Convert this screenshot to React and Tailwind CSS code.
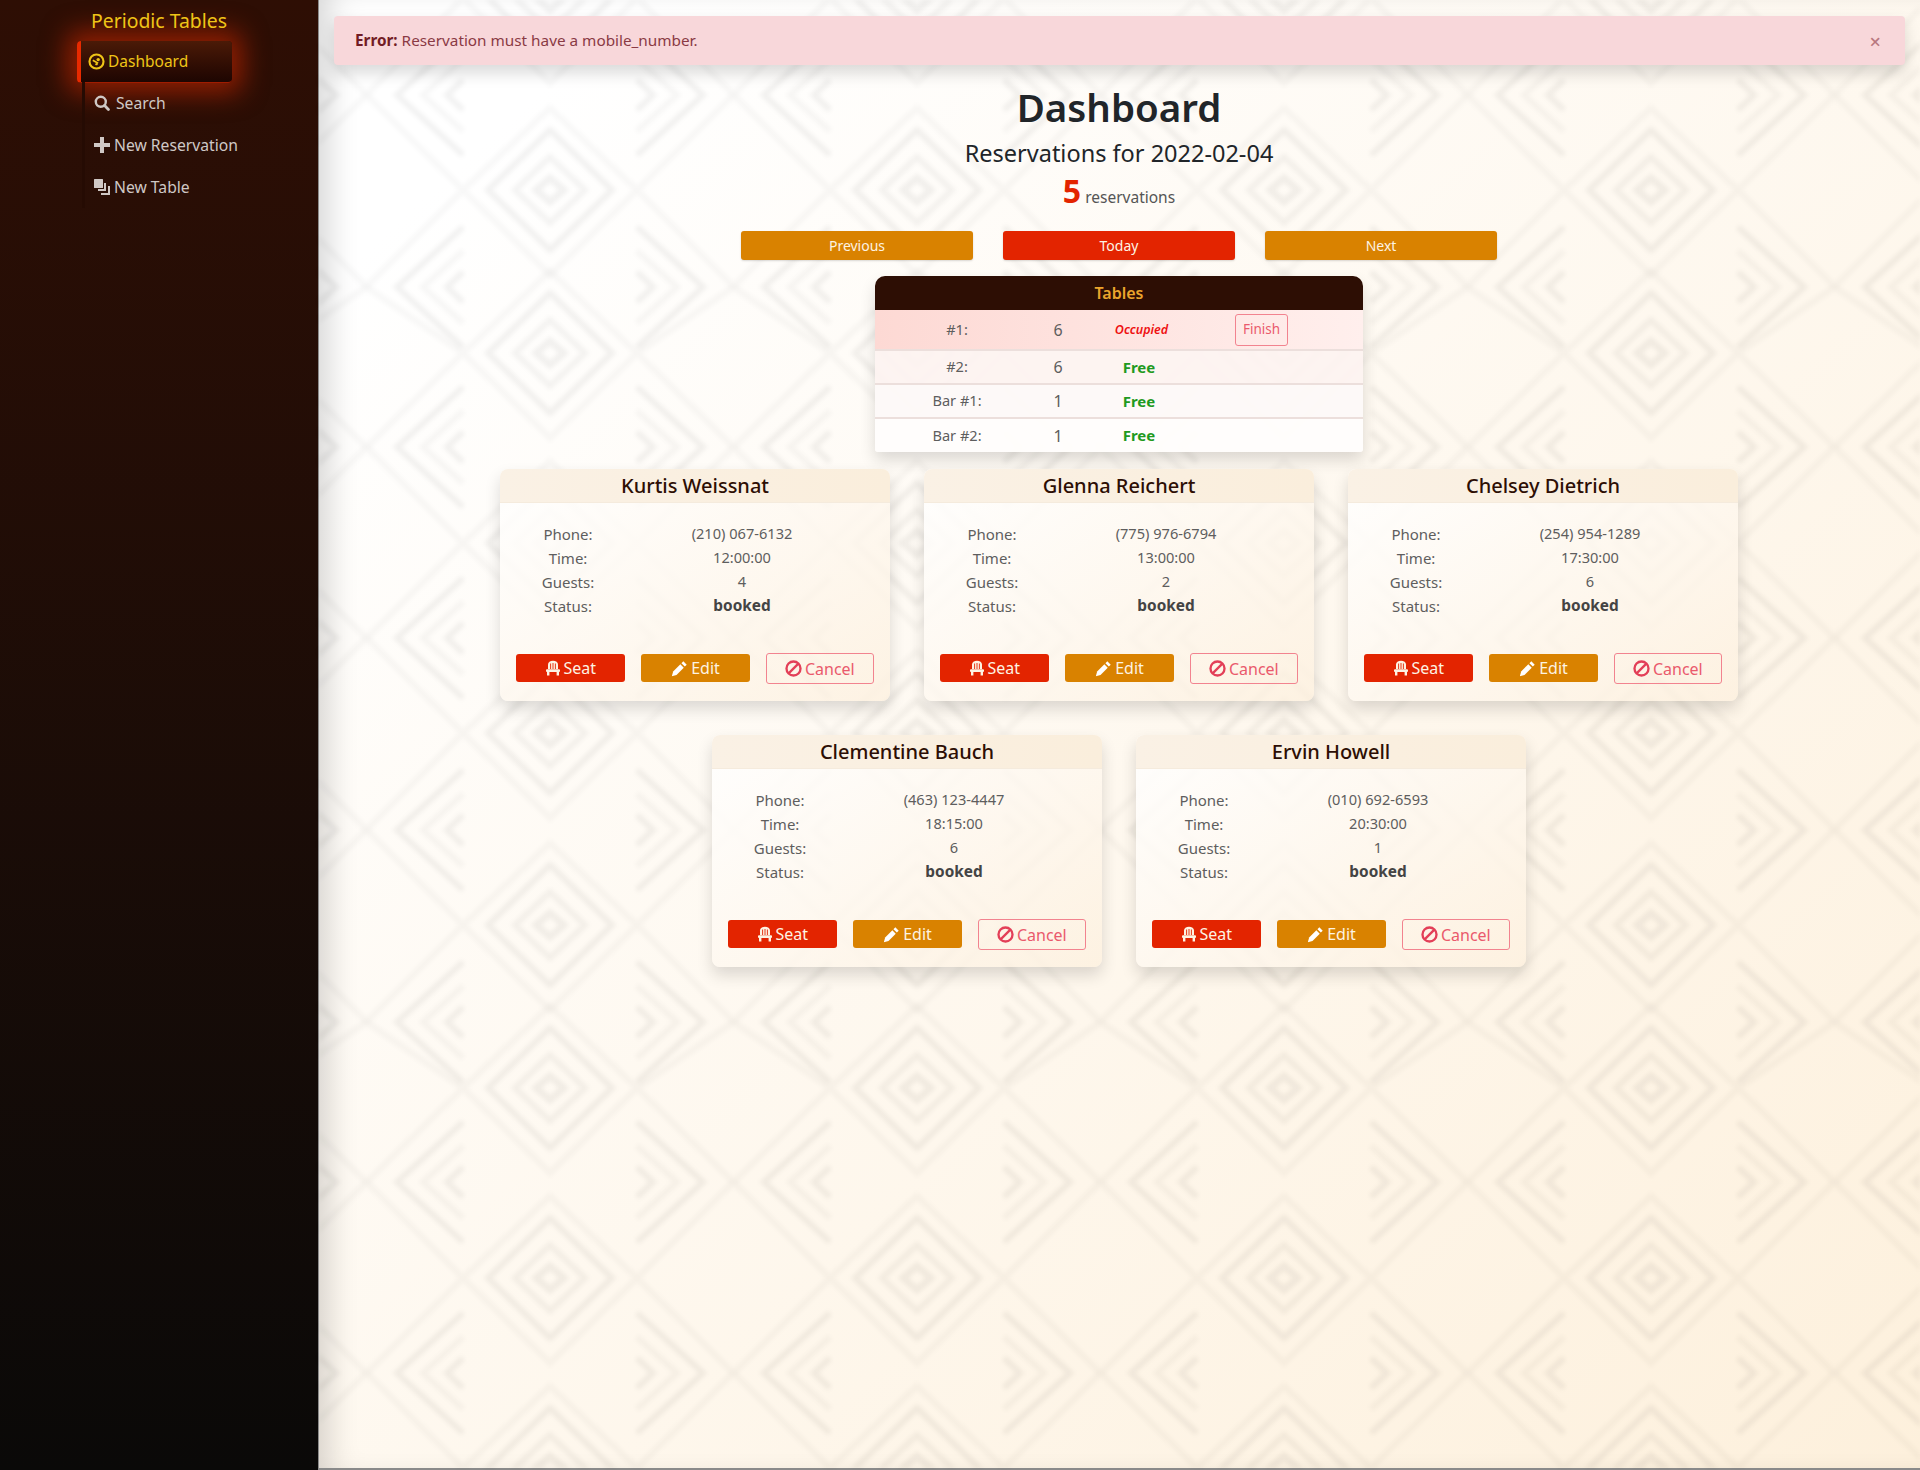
import React from "react";

const FONT = "font-['Noto_Sans',sans-serif]";

function DashIcon({ className }) {
  return (
    <svg viewBox="0 0 16 16" className={className} fill="none">
      <circle cx="8" cy="8" r="6.6" stroke="currentColor" strokeWidth="2" />
      <circle cx="9.6" cy="6.2" r="1.6" fill="currentColor" />
      <path d="M4.5 6.8 L9.5 9.6" stroke="currentColor" strokeWidth="1.6" />
      <circle cx="8" cy="10.5" r="1.1" fill="currentColor" />
    </svg>
  );
}
function SearchIcon({ className }) {
  return (
    <svg viewBox="0 0 16 16" className={className} fill="none">
      <circle cx="6.8" cy="6.8" r="5" stroke="currentColor" strokeWidth="2.4" />
      <path d="M10.6 10.6 L14.4 14.4" stroke="currentColor" strokeWidth="2.8" strokeLinecap="round" />
    </svg>
  );
}
function PlusIcon({ className }) {
  return (
    <svg viewBox="0 0 16 16" className={className} fill="currentColor">
      <path d="M6 0h4v6h6v4h-6v6H6v-6H0V6h6z" />
    </svg>
  );
}
function LayersIcon({ className }) {
  return (
    <svg viewBox="0 0 16 16" className={className} fill="currentColor">
      <rect x="0" y="0" width="9" height="9" rx="0.5" />
      <path d="M10 4h2v8H4v-2h6z" />
      <path d="M14 7h2v9H7v-2h7z" />
    </svg>
  );
}
function ChairIcon({ className }) {
  return (
    <svg viewBox="0 0 16 16" className={className} fill="currentColor">
      <path d="M3 9V4.5C3 2.3 5.2 0.8 8 0.8s5 1.5 5 3.7V9z" />
      <path d="M5.6 3.5V9M8 3V9M10.4 3.5V9" stroke="#e32400" strokeWidth="0.9" fill="none" />
      <rect x="1" y="9.3" width="14" height="2.7" rx="1" />
      <rect x="2" y="12" width="2.4" height="3.5" />
      <rect x="11.6" y="12" width="2.4" height="3.5" />
    </svg>
  );
}
function PencilIcon({ className }) {
  return (
    <svg viewBox="0 0 16 16" className={className} fill="currentColor">
      <path d="M11.6 1.2 L14.8 4.4 L13 6.2 L9.8 3 Z" />
      <path d="M8.8 4 L12 7.2 L5.2 14 L0.8 15.2 L2 10.8 Z" />
    </svg>
  );
}
function BanIcon({ className }) {
  return (
    <svg viewBox="0 0 16 16" className={className} fill="none">
      <circle cx="8" cy="8" r="6.6" stroke="currentColor" strokeWidth="2.2" />
      <path d="M3.4 12.6 L12.6 3.4" stroke="currentColor" strokeWidth="2.2" />
    </svg>
  );
}

/* decorative wallpaper: a repeating drawing of concentric diamonds and chevrons */
const CX = 183.5;
const DS = [190, 353, 543, 733];
const CS = [95, 287, 447, 638, 830];
const diamond = (cx, cy, w, h, h2 = h) =>
  `M${cx} ${cy - h} L${cx - w} ${cy} L${cx} ${cy + h2} L${cx + w} ${cy} Z`;

function tileShapes(shift) {
  const out = [];
  DS.forEach((d, i) => {
    const p = CS[i] + shift;
    const n = CS[i + 1] + shift;
    const y = d + shift;
    out.push(
      <path key={`l${y}`} d={`M0 ${p} L${CX - 87} ${y} L0 ${n} M367 ${p} L${CX + 87} ${y} L367 ${n} ${diamond(CX, y, 87, 82, 85)}`} stroke="#000" strokeOpacity="0.026" strokeWidth="6" fill="none" />,
      <path key={`a${y}`} d={diamond(CX, y, 62, 60)} stroke="#000" strokeOpacity="0.05" strokeWidth="6" fill="none" />,
      <path key={`b${y}`} d={diamond(CX, y, 35, 33)} stroke="#000" strokeOpacity="0.042" strokeWidth="6" fill="none" />,
      <path key={`c${y}`} d={diamond(CX, y, 14, 12)} stroke="#000" strokeOpacity="0.05" strokeWidth="7" fill="none" />
    );
  });
  CS.slice(0, 4).forEach((c) => {
    const y = c + shift;
    [[153, 60, 0.05], [127, 36, 0.032], [103, 15, 0.05]].forEach(([v, dy, o]) => {
      out.push(
        <path
          key={`ch${y}-${v}`}
          d={`M${CX - 87} ${y - dy} L${CX - v} ${y} L${CX - 87} ${y + dy} M${CX + 87} ${y - dy} L${CX + v} ${y} L${CX + 87} ${y + dy}`}
          stroke="#000"
          strokeOpacity={o}
          strokeWidth="6"
          fill="none"
        />
      );
    });
  });
  return out;
}

function Wallpaper() {
  return (
    <svg className="absolute inset-0 w-full h-full pointer-events-none blur-[2px]" aria-hidden="true">
      <defs>
        <pattern id="tile" x="47.5" y="0" width="367" height="735" patternUnits="userSpaceOnUse">
          {tileShapes(-735)}
          {tileShapes(0)}
          {tileShapes(735)}
        </pattern>
      </defs>
      <rect width="100%" height="100%" fill="url(#tile)" />
    </svg>
  );
}

function NavItem({ icon: Icon, label, gap }) {
  return (
    <div className={`flex items-center whitespace-nowrap h-[42px] pl-[9px] ml-[5px] text-[15.7px] text-[#cfc8c5] ${gap} border-l-[3px] border-[#250b03]`}>
      <Icon className="w-[16px] h-[16px] shrink-0" />
      <span className="mt-[2px]">{label}</span>
    </div>
  );
}

function Sidebar() {
  return (
    <aside className="w-[319px] shrink-0 bg-linear-to-b from-[#2e0e04] to-[#0a0908] border-r border-[#8a8a8a]">
      <div className="pl-[91px] pt-[7px] h-[41px] text-[19.4px] leading-[28px] text-[#efc417]">Periodic Tables</div>
      <div className="w-[155px] ml-[77px]">
        <div className="flex items-center gap-[3px] h-[42px] pl-[8px] pr-2 -mb-px border-l-[4px] border-b border-l-[#e82a00] border-b-[#a01c00] rounded-[4px] bg-linear-to-b from-[#4b1a07] to-[#1e0602] text-[15.5px] text-[#efc417] shadow-[0_0_26px_10px_rgba(205,40,0,0.62)]">
          <DashIcon className="w-[17px] h-[17px] shrink-0 -ml-[1px]" />
          <span className="mt-px">Dashboard</span>
        </div>
        <NavItem icon={SearchIcon} label="Search" gap="gap-[6px]" />
        <NavItem icon={PlusIcon} label="New Reservation" gap="gap-[4px]" />
        <NavItem icon={LayersIcon} label="New Table" gap="gap-[4px]" />
      </div>
    </aside>
  );
}

function NavButton({ label, red }) {
  return (
    <button className={`w-[232px] h-[29px] rounded-[3px] text-[14px] text-[#fdf3e3] ${red ? "bg-[#e32400]" : "bg-[#d98200]"} shadow-[0_1px_2px_rgba(0,0,0,0.15)]`}>
      {label}
    </button>
  );
}

const tables = [
  { name: "#1:", cap: 6, occupied: true },
  { name: "#2:", cap: 6 },
  { name: "Bar #1:", cap: 1 },
  { name: "Bar #2:", cap: 1 },
];
const rowBg = [
  "h-[41px] bg-linear-to-r from-[#fdd9d4] to-[#ffefed]",
  "h-[34px] bg-[#fdf3f1]/90",
  "h-[34px] bg-[#fdf9f8]/95",
  "h-[33px] bg-[#fffdfc]/95",
];

function TablesCard() {
  return (
    <div className="w-[488px] mt-[16px] rounded-t-[10px] rounded-b-[3px] overflow-hidden shadow-[0_8px_16px_rgba(0,0,0,0.14)]">
      <div className="h-[34px] flex items-center justify-center bg-[#2d0e04] text-[16px] font-semibold text-[#eba52c]">Tables</div>
      {tables.map((t, i) => (
        <div key={t.name} className={`grid grid-cols-[164px_38px_124px_162px] items-center border-b-2 border-[#ecdfdc] last:border-b-0 text-[16px] text-[#5e5e5e] ${rowBg[i]}`}>
          <div className="text-center text-[14.6px]">{t.name}</div>
          <div className="text-center">{t.cap}</div>
          {t.occupied ? (
            <div className="text-center text-[12.5px] font-semibold italic text-[#ee1111] pl-[5px] mt-[2px]">Occupied</div>
          ) : (
            <div className="text-center text-[15px] font-bold text-[#1f9a21]">Free</div>
          )}
          {t.occupied ? (
            <div>
              <button className="ml-[34px] w-[53px] h-[32px] rounded-[3px] border border-[#f2838f] text-[13.5px] text-[#ea5a6c]">Finish</button>
            </div>
          ) : (
            <div />
          )}
        </div>
      ))}
    </div>
  );
}

function Row({ label, children, bold }) {
  return (
    <div className="grid grid-cols-[136px_212px] h-[24px] items-center text-[15px] text-[#5e5e5e]">
      <div className="text-center">{label}</div>
      <div className={`text-center ${bold ? "font-bold text-[15.4px] text-[#444]" : "text-[14.6px]"}`}>{children}</div>
    </div>
  );
}

function Card({ name, phone, time, guests }) {
  return (
    <div className="w-[390px] h-[232px] rounded-[8px] overflow-hidden bg-linear-to-br from-white/90 to-[#fdf0de]/75 shadow-[0_8px_16px_rgba(0,0,0,0.14)]">
      <div className="h-[34px] flex items-center justify-center bg-linear-to-r from-[#faf1e5] to-[#faeedc] border-b border-[#f5ebdd] text-[20px] font-medium text-[#2d0e04]">
        {name}
      </div>
      <div className="pt-[19px]">
        <Row label="Phone:">{phone}</Row>
        <Row label="Time:">{time}</Row>
        <Row label="Guests:">{guests}</Row>
        <Row label="Status:" bold>booked</Row>
      </div>
      <div className="flex items-start gap-[16px] px-[16px] mt-[36px]">
        <button className="w-[110px] h-[28px] rounded-[3px] bg-[#e32400] text-[#fdf3e3] text-[16px] flex items-center justify-center gap-[2px]">
          <ChairIcon className="w-[16px] h-[16px]" />
          Seat
        </button>
        <button className="w-[109px] h-[28px] rounded-[3px] bg-[#d98200] text-[#fdf3e3] text-[16px] flex items-center justify-center gap-[3px]">
          <PencilIcon className="w-[17px] h-[17px] text-white" />
          Edit
        </button>
        <button className="w-[109px] h-[31px] -mt-px rounded-[3px] border border-[#f2838f] text-[#ea5a6c] text-[16px] flex items-center justify-center gap-[3px]">
          <BanIcon className="w-[17px] h-[17px] text-[#e33f58]" />
          Cancel
        </button>
      </div>
    </div>
  );
}

const reservations = [
  { name: "Kurtis Weissnat", phone: "(210) 067-6132", time: "12:00:00", guests: 4 },
  { name: "Glenna Reichert", phone: "(775) 976-6794", time: "13:00:00", guests: 2 },
  { name: "Chelsey Dietrich", phone: "(254) 954-1289", time: "17:30:00", guests: 6 },
  { name: "Clementine Bauch", phone: "(463) 123-4447", time: "18:15:00", guests: 6 },
  { name: "Ervin Howell", phone: "(010) 692-6593", time: "20:30:00", guests: 1 },
];

export default function App() {
  return (
    <div className={`flex w-full h-[1470px] overflow-hidden ${FONT}`}>
      <Sidebar />
      <main className="relative flex-1 bg-linear-to-br from-white from-10% to-[#fdf0dc] border-b-2 border-[#8a8a8a]">
        <Wallpaper />
        <div className="absolute inset-0 pointer-events-none shadow-[inset_24px_0_30px_-14px_rgba(0,0,0,0.16)]" />
        <div className="relative flex flex-col items-center pt-[16px] pr-px">
          <div className="self-stretch ml-[15px] mr-[14px] h-[49px] flex items-center justify-between pl-[21px] pr-[24px] rounded-[4px] bg-[#f8d7da] text-[15.3px] text-[#8a3a44] shadow-[0_8px_16px_rgba(0,0,0,0.15)]">
            <span>
              <b className="font-bold text-[#721c24]">Error:</b> Reservation must have a mobile_number.
            </span>
            <span className="text-[20px] font-medium leading-none text-[#b9777f] mt-[3px]">×</span>
          </div>
          <h1 className="mt-[18px] text-[38.5px] leading-[48px] font-semibold text-[#212529]">Dashboard</h1>
          <h4 className="mt-[8px] text-[23.5px] leading-[29px] text-[#212529]">Reservations for 2022-02-04</h4>
          <div className="mt-[4px] h-[38px] flex items-baseline gap-[4px] text-[#555]">
            <span className="text-[32px] leading-[38px] font-bold text-[#e32400]">5</span>
            <span className="text-[15.5px]">reservations</span>
          </div>
          <div className="mt-[21px] flex gap-[30px]">
            <NavButton label="Previous" />
            <NavButton label="Today" red />
            <NavButton label="Next" />
          </div>
          <TablesCard />
          <div className="mt-[17px] w-[1240px] flex flex-wrap justify-center gap-x-[34px] gap-y-[34px]">
            {reservations.map((r) => (
              <Card key={r.name} {...r} />
            ))}
          </div>
        </div>
      </main>
    </div>
  );
}
